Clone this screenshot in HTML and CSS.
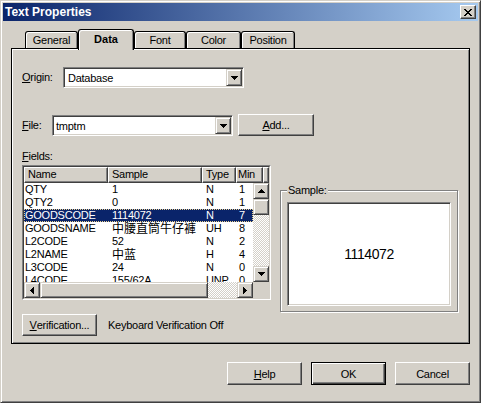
FILE: index.html
```html
<!DOCTYPE html>
<html>
<head>
<meta charset="utf-8">
<title>Text Properties</title>
<link rel="stylesheet" href="styles.css">
</head>
<body>
<div class="window">
  <div class="titlebar">
    <span class="title">Text Properties</span>
    <span class="close"><svg width="8" height="7" viewBox="0 0 8 7" shape-rendering="crispEdges"><path d="M0 0h2v1H0zM6 0h2v1H6zM1 1h2v1H1zM5 1h2v1H5zM2 2h4v1H2zM3 3h2v1H3zM2 4h4v1H2zM1 5h2v1H1zM5 5h2v1H5zM0 6h2v1H0zM6 6h2v1H6z" fill="#000"/></svg></span>
  </div>
  <div class="tabs">
    <div class="tab w-general">General</div>
    <div class="tab tab-active w-data">Data</div>
    <div class="tab w-font">Font</div>
    <div class="tab w-color">Color</div>
    <div class="tab w-position">Position</div>
  </div>
  <div class="panel">
    <div class="row row-origin">
      <span class="lbl lbl-origin"><u>O</u>rigin:</span>
      <div class="combo"><span class="combo-text">Database</span><span class="drop"><svg width="7" height="4" viewBox="0 0 7 4" shape-rendering="crispEdges"><path d="M0 0h7v1H6v1H5v1H4v1H3V3H2V2H1V1H0z" fill="#000"/></svg></span></div>
    </div>
    <div class="row row-file">
      <span class="lbl lbl-file"><u>F</u>ile:</span>
      <div class="combo combo-file"><span class="combo-text">tmptm</span><span class="drop"><svg width="7" height="4" viewBox="0 0 7 4" shape-rendering="crispEdges"><path d="M0 0h7v1H6v1H5v1H4v1H3V3H2V2H1V1H0z" fill="#000"/></svg></span></div>
      <div class="btn btn-add"><u>A</u>dd...</div>
    </div>
    <div class="lower">
      <div class="left-col">
        <div class="fields-lbl"><u>F</u>ields:</div>
        <div class="list">
          <div class="list-inner">
            <div class="hdr">
              <div class="hcell">Name</div>
              <div class="hcell">Sample</div>
              <div class="hcell">Type</div>
              <div class="hcell hcell-min">Min</div>
              <div class="hcell"></div>
            </div>
            <div class="list-body">
              <div class="rows">
                <div class="lrow"><span class="c1">QTY</span><span class="c2">1</span><span class="c3">N</span><span class="c4">1</span></div>
                <div class="lrow"><span class="c1">QTY2</span><span class="c2">0</span><span class="c3">N</span><span class="c4">1</span></div>
                <div class="lrow lrow-sel"><span class="c1">GOODSCODE</span><span class="c2">1114072</span><span class="c3">N</span><span class="c4">7</span></div>
                <div class="lrow"><span class="c1">GOODSNAME</span><span class="c2"><span class="cjk">中腰直筒牛仔褲</span></span><span class="c3">UH</span><span class="c4">8</span></div>
                <div class="lrow"><span class="c1">L2CODE</span><span class="c2">52</span><span class="c3">N</span><span class="c4">2</span></div>
                <div class="lrow"><span class="c1">L2NAME</span><span class="c2"><span class="cjk">中蓝</span></span><span class="c3">H</span><span class="c4">4</span></div>
                <div class="lrow"><span class="c1">L3CODE</span><span class="c2">24</span><span class="c3">N</span><span class="c4">0</span></div>
                <div class="lrow"><span class="c1">L4CODE</span><span class="c2">155/62A</span><span class="c3">UNP</span><span class="c4">0</span></div>
              </div>
              <div class="vscroll">
                <div class="sbtn"><svg width="7" height="4" viewBox="0 0 7 4" shape-rendering="crispEdges"><path d="M3 0h1v1h1v1h1v1h1v1H0V3h1V2h1V1h1z" fill="#000"/></svg></div>
                <div class="sthumb vthumb"></div>
                <div class="strack"></div>
                <div class="sbtn"><svg width="7" height="4" viewBox="0 0 7 4" shape-rendering="crispEdges"><path d="M0 0h7v1H6v1H5v1H4v1H3V3H2V2H1V1H0z" fill="#000"/></svg></div>
              </div>
              <div class="hscroll">
                <div class="sbtn"><svg width="4" height="7" viewBox="0 0 4 7" shape-rendering="crispEdges"><path d="M3 0h1v7H3V6H2V5H1V4H0V3h1V2h1V1h1z" fill="#000"/></svg></div>
                <div class="sthumb hthumb"></div>
                <div class="strack"></div>
                <div class="sbtn"><svg width="4" height="7" viewBox="0 0 4 7" shape-rendering="crispEdges"><path d="M0 0h1v1h1v1h1v1h1v1H3v1H2v1H1v1H0z" fill="#000"/></svg></div>
              </div>
              <div class="corner"></div>
            </div>
          </div>
        </div>
        <div class="verif-row">
          <div class="btn btn-verif"><u>V</u>erification...</div>
          <span class="verif-text">Keyboard Verification Off</span>
        </div>
      </div>
      <div class="group">
        <span class="group-title">Sample:</span>
        <div class="sample-box">1114072</div>
      </div>
    </div>
  </div>
  <div class="buttons">
    <div class="btn btn-dlg"><u>H</u>elp</div>
    <div class="btn btn-dlg btn-default">OK</div>
    <div class="btn btn-dlg">Cancel</div>
  </div>
</div>
</body>
</html>
```

FILE: styles.css
```css
* { box-sizing: border-box; }
html, body { margin: 0; padding: 0; }
body {
  width: 481px;
  height: 403px;
  background: #d4d0c8;
  font-family: "Liberation Sans", Arial, sans-serif;
  font-size: 11px;
  letter-spacing: -0.25px;
  color: #000;
  overflow: hidden;
}
u { text-decoration: underline; text-underline-offset: 1px; }

.window {
  width: 481px;
  height: 403px;
  border: 1px solid;
  border-color: #d4d0c8 #404040 #404040 #d4d0c8;
  padding: 2px;
  box-shadow: inset 1px 1px 0 #fff, inset -1px -1px 0 #808080;
  display: flex;
  flex-direction: column;
}

.titlebar {
  height: 18px;
  flex: none;
  background: linear-gradient(to right, #0a246a, #a6caf0);
  display: flex;
  align-items: center;
  justify-content: space-between;
  padding: 0 2px 0 2px;
}
.title {
  color: #fff;
  font-weight: bold;
  font-size: 12px;
  letter-spacing: 0;
}
.close {
  width: 16px;
  height: 14px;
  background: #d4d0c8;
  border: 1px solid;
  border-color: #fff #404040 #404040 #fff;
  box-shadow: inset -1px -1px 0 #808080;
  display: flex;
  align-items: center;
  justify-content: center;
}

.tabs {
  flex: none;
  height: 19px;
  margin: 8px 0 0 22px;
  display: flex;
  align-items: flex-end;
}
.tab {
  height: 17px;
  border: 1px solid #000;
  border-bottom: none;
  border-radius: 3px 3px 0 0;
  box-shadow: inset 1px 1px 0 #fff, inset -1px 0 0 #808080;
  display: flex;
  align-items: center;
  justify-content: center;
  background: #d4d0c8;
}
.tab-active {
  height: 21px;
  margin-bottom: -2px;
  padding-bottom: 2px;
  position: relative;
  z-index: 2;
  font-weight: bold;
  letter-spacing: 0;
}
.w-general { width: 53px; }
.w-data { width: 56px; }
.w-font { width: 52px; }
.w-color { width: 55px; }
.w-position { width: 54px; }

.panel {
  flex: none;
  height: 296px;
  margin: 0 8px;
  border: 1px solid #000;
  box-shadow: inset 1px 1px 0 #fff, inset -1px -1px 0 #808080;
  padding: 1px 0 0 10px;
}

.row { display: flex; }
.row-origin {
  margin-top: 17px;
  height: 21px;
  align-items: center;
}
.row-file {
  margin-top: 26px;
  height: 23px;
  align-items: flex-start;
}
.lbl { line-height: 13px; }
.lbl-origin { width: 41px; }
.lbl-file { width: 30px; margin-top: 5px; }

.combo {
  width: 181px;
  height: 21px;
  background: #fff;
  border: 1px solid;
  border-color: #808080 #fff #fff #808080;
  box-shadow: inset 1px 1px 0 #404040, inset -1px -1px 0 #d4d0c8;
  display: flex;
  align-items: center;
  justify-content: space-between;
  padding: 1px;
}
.combo-file { margin-top: 1px; }
.combo-text { padding-left: 3px; }
.combo-file .combo-text { padding-left: 2px; }
.drop {
  width: 16px;
  height: 17px;
  background: #d4d0c8;
  border: 1px solid;
  border-color: #d4d0c8 #404040 #404040 #d4d0c8;
  box-shadow: inset 1px 1px 0 #fff, inset -1px -1px 0 #808080;
  display: flex;
  align-items: center;
  justify-content: center;
}

.btn {
  background: #d4d0c8;
  border: 1px solid;
  border-color: #fff #404040 #404040 #fff;
  box-shadow: inset -1px -1px 0 #808080;
  display: flex;
  align-items: center;
  justify-content: center;
}
.btn-add {
  width: 76px;
  height: 22px;
  margin-left: 5px;
}

.lower { display: flex; }
.left-col { width: 249px; flex: none; }
.fields-lbl {
  margin-top: 13px;
  line-height: 13px;
  height: 13px;
  margin-bottom: 2px;
}

.list {
  width: 249px;
  height: 135px;
  border: 1px solid;
  border-color: #808080 #fff #fff #808080;
}
.list-inner {
  width: 100%;
  height: 100%;
  border: 1px solid;
  border-color: #404040 #d4d0c8 #d4d0c8 #404040;
  background: #fff;
  display: flex;
  flex-direction: column;
}
.hdr {
  height: 16px;
  flex: none;
  display: grid;
  grid-template-columns: 84px 94px 34px 27px 6px;
}
.hcell {
  background: #d4d0c8;
  border: 1px solid;
  border-color: #fff #404040 #404040 #fff;
  box-shadow: inset -1px -1px 0 #808080;
  line-height: 13px;
  padding-left: 3px;
  overflow: hidden;
  white-space: nowrap;
}
.hcell-min { padding-left: 1px; }

.list-body {
  flex: 1;
  display: grid;
  grid-template-columns: 229px 16px;
  grid-template-rows: 99px 16px;
}
.rows { overflow: hidden; }
.lrow {
  width: 229px;
  height: 13px;
  line-height: 13px;
  display: grid;
  grid-template-columns: 84px 94px 34px 17px;
  white-space: nowrap;
  overflow: hidden;
}
.c1 { padding-left: 1px; }
.c2 { padding-left: 4px; }
.c3 { padding-left: 4px; }
.c4 { padding-left: 3px; }
.cjk {
  font-family: "Noto Sans CJK TC", "Noto Sans CJK SC", sans-serif;
  font-size: 12px;
  letter-spacing: 0;
  line-height: 11px;
  vertical-align: -1px;
}
.lrow-sel {
  background: #0a246a;
  color: #fff;
  outline: 1px dotted #e8d090;
  outline-offset: -1px;
}

.vscroll {
  display: flex;
  flex-direction: column;
}
.hscroll {
  display: flex;
}
.sbtn {
  width: 16px;
  height: 16px;
  flex: none;
  background: #d4d0c8;
  border: 1px solid;
  border-color: #d4d0c8 #404040 #404040 #d4d0c8;
  box-shadow: inset 1px 1px 0 #fff, inset -1px -1px 0 #808080;
  display: flex;
  align-items: center;
  justify-content: center;
}
.sthumb {
  flex: none;
  background: #d4d0c8;
  border: 1px solid;
  border-color: #d4d0c8 #404040 #404040 #d4d0c8;
  box-shadow: inset 1px 1px 0 #fff, inset -1px -1px 0 #808080;
}
.vthumb { width: 16px; height: 16px; }
.hthumb { width: 168px; height: 16px; }
.strack {
  flex: 1;
  background-color: #fff;
  background-image: repeating-conic-gradient(#d4d0c8 0% 25%, #fff 0% 50%);
  background-size: 2px 2px;
}
.corner { background: #d4d0c8; }

.verif-row {
  margin-top: 14px;
  display: flex;
  align-items: center;
  height: 22px;
}
.btn-verif { width: 75px; height: 22px; }
.verif-text { margin-left: 11px; }

.group {
  position: relative;
  width: 178px;
  height: 122px;
  margin: 53px 0 0 9px;
  border: 1px solid #808080;
  box-shadow: 1px 1px 0 #fff, inset 1px 1px 0 #fff;
}
.group-title {
  position: absolute;
  top: -7px;
  left: 6px;
  padding: 0 1px;
  line-height: 13px;
  background: #d4d0c8;
}
.sample-box {
  width: 164px;
  height: 104px;
  margin: 11px 0 0 6px;
  background: #fff;
  border: 1px solid;
  border-color: #808080 #fff #fff #808080;
  box-shadow: inset 1px 1px 0 #404040, inset -1px -1px 0 #d4d0c8;
  display: flex;
  align-items: center;
  justify-content: center;
  font-size: 14px;
  letter-spacing: -0.4px;
}

.buttons {
  flex: none;
  margin-top: 18px;
  display: flex;
  justify-content: flex-end;
  gap: 9px;
  padding-right: 8px;
}
.btn-dlg { width: 75px; height: 23px; }
.btn-default {
  border: 1px solid #000;
  box-shadow: inset 1px 1px 0 #fff, inset -1px -1px 0 #404040, inset -2px -2px 0 #808080;
}
```
